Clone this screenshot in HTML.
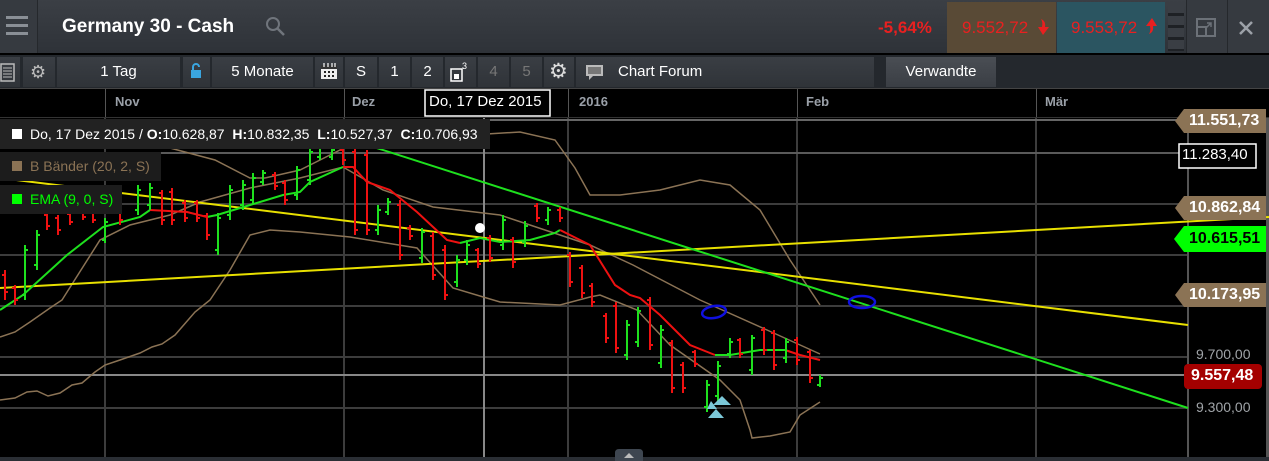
<!DOCTYPE html>
<html><head><meta charset="utf-8"><style>
body{margin:0;width:1269px;height:461px;overflow:hidden;background:#000;font-family:"Liberation Sans",sans-serif;position:relative}
.a{position:absolute}
.hdr{left:0;top:0;width:1269px;height:53px;background:linear-gradient(#3b3f45,#2e3238)}
.tb{left:0;top:55px;width:1269px;height:33px;background:#24282d}
.btn{position:absolute;top:57px;height:30px;background:linear-gradient(#3a3e44,#2f3338);color:#fff;font-size:15px;line-height:30px;text-align:center}
.ax{color:#9aa0a8;font-size:13px;font-weight:bold;top:94px}
.tag{position:absolute;height:24px;color:#fff;font-weight:bold;font-size:16px;line-height:24px}
</style></head><body>
<div class="a hdr"></div>
<div class="a" style="left:0;top:0;width:37px;height:53px;background:#363a40;border-right:1px solid #25282c"></div>
<div class="a" style="left:6px;top:16px;width:22px;height:3px;background:#8a8f96;box-shadow:0 8px 0 #8a8f96,0 16px 0 #8a8f96"></div>
<div class="a" style="left:62px;top:16px;color:#fff;font-weight:bold;font-size:19px">Germany 30 - Cash</div>
<svg class="a" style="left:264px;top:15px" width="24" height="24"><circle cx="9" cy="9" r="6" fill="none" stroke="#70757c" stroke-width="2"/><line x1="13" y1="13" x2="20" y2="20" stroke="#70757c" stroke-width="2.5"/></svg>
<div class="a" style="left:878px;top:18px;color:#e82020;font-weight:bold;font-size:17px">-5,64%</div>
<div class="a" style="left:947px;top:2px;width:109px;height:51px;background:#594a36"></div>
<div class="a" style="left:962px;top:18px;color:#e82020;font-size:17px">9.552,72</div>
<svg class="a" style="left:1037px;top:18px" width="14" height="18"><path d="M4 1 Q9 3 8 9 L12 9 L6 17 L1 9 L5 9 Q6 4 4 1Z" fill="#e82020"/></svg>
<div class="a" style="left:1057px;top:2px;width:108px;height:51px;background:#2b5561"></div>
<div class="a" style="left:1071px;top:18px;color:#e82020;font-size:17px">9.553,72</div>
<svg class="a" style="left:1145px;top:17px" width="14" height="18"><path d="M4 17 Q9 15 8 9 L12 9 L7 1 L1 9 L5 9 Q6 14 4 17Z" fill="#e82020"/></svg>
<div class="a" style="left:1168px;top:4px;width:16px;height:47px;background:repeating-linear-gradient(#3a3e44 0 9px,#1e2125 9px 12px)"></div>
<div class="a" style="left:1186px;top:0;width:40px;height:53px;background:#363a40;border-left:1px solid #25282c"></div>
<svg class="a" style="left:1195px;top:17px" width="24" height="22"><rect x="2" y="2" width="18" height="17" fill="none" stroke="#6c7178" stroke-width="2"/><rect x="2" y="10" width="9" height="9" fill="none" stroke="#6c7178" stroke-width="2"/><path d="M12 6 L16 6 L16 10 M16 6 L11 11" stroke="#6c7178" stroke-width="1.5" fill="none"/></svg>
<div class="a" style="left:1227px;top:0;width:42px;height:53px;background:#363a40;border-left:1px solid #25282c"></div>
<svg class="a" style="left:1238px;top:20px" width="16" height="16"><path d="M2 2 L14 14 M14 2 L2 14" stroke="#9ca1a8" stroke-width="2.5"/></svg>

<div class="a tb"></div>
<div class="btn" style="left:0;width:20px"></div>
<svg class="a" style="left:0;top:63px" width="16" height="20"><rect x="1" y="1" width="13" height="17" fill="none" stroke="#bbb" stroke-width="1.5"/><path d="M3 5h9M3 8h9M3 11h9M3 14h9" stroke="#bbb"/></svg>
<div class="btn" style="left:23px;width:32px"></div>
<div class="a" style="left:30px;top:63px;color:#bbb;font-size:18px;line-height:18px">⚙</div>
<div class="btn" style="left:57px;width:123px">1 Tag</div>
<div class="btn" style="left:183px;width:27px"></div>
<svg class="a" style="left:190px;top:62px" width="12" height="18"><path d="M3 8 V5 a3 3 0 0 1 6 0" stroke="#3aa6e0" stroke-width="2" fill="none"/><rect x="1" y="8" width="10" height="8" fill="#3aa6e0"/></svg>
<div class="btn" style="left:212px;width:101px">5 Monate</div>
<div class="btn" style="left:315px;width:28px"></div>
<svg class="a" style="left:319px;top:61px" width="20" height="20"><rect x="2" y="4" width="16" height="14" fill="#eee"/><rect x="2" y="4" width="16" height="4" fill="#333"/><path d="M5 2v4M9 2v4M13 2v4M16 2v4" stroke="#eee" stroke-width="1.3"/><path d="M5 10h2v2H5zM9 10h2v2H9zM13 10h2v2h-2zM5 14h2v2H5zM9 14h2v2H9zM13 14h2v2h-2z" fill="#222"/></svg>
<div class="btn" style="left:345px;width:32px">S</div>
<div class="btn" style="left:379px;width:31px">1</div>
<div class="btn" style="left:412px;width:31px">2</div>
<div class="btn" style="left:445px;width:31px"></div>
<svg class="a" style="left:450px;top:62px" width="18" height="22"><rect x="1" y="7" width="11" height="12" fill="none" stroke="#fff" stroke-width="1.5"/><rect x="4" y="12" width="5" height="5" fill="#fff"/><text x="12" y="7" fill="#fff" font-size="9" font-family="Liberation Sans">3</text></svg>
<div class="btn" style="left:478px;width:31px;color:#777">4</div>
<div class="btn" style="left:511px;width:31px;color:#777">5</div>
<div class="btn" style="left:544px;width:30px"></div>
<div class="a" style="left:549px;top:61px;color:#ddd;font-size:21px;line-height:21px">⚙</div>
<div class="btn" style="left:576px;width:298px"></div>
<svg class="a" style="left:584px;top:63px" width="22" height="20"><path d="M2 2h17v11H9l-4 4v-4H2z" fill="#bbb"/><path d="M4 4h13v7H4z" fill="#777"/></svg>
<div class="a" style="left:618px;top:63px;color:#fff;font-size:15px">Chart Forum</div>
<div class="btn" style="left:886px;width:110px;background:linear-gradient(#4a4e54,#3a3e44)">Verwandte</div>

<div class="a" style="left:0;top:88px;width:1269px;height:1px;background:#444"></div>
<div class="a" style="left:105px;top:89px;width:1px;height:29px;background:#555"></div>
<div class="a" style="left:344px;top:89px;width:1px;height:29px;background:#555"></div>
<div class="a" style="left:568px;top:89px;width:1px;height:29px;background:#555"></div>
<div class="a" style="left:797px;top:89px;width:1px;height:29px;background:#555"></div>
<div class="a" style="left:1036px;top:89px;width:1px;height:29px;background:#555"></div>
<div class="a ax" style="left:115px">Nov</div>
<div class="a ax" style="left:352px">Dez</div>
<div class="a ax" style="left:579px">2016</div>
<div class="a ax" style="left:806px">Feb</div>
<div class="a ax" style="left:1045px">Mär</div>
<div class="a" style="left:0;top:117px;width:1269px;height:1px;background:#333"></div>

<svg class="a" style="left:0;top:0" width="1269" height="461">
<g stroke="#3c3c3c" stroke-width="2">
<line x1="0" y1="153" x2="1188" y2="153"/><line x1="0" y1="204" x2="1188" y2="204"/><line x1="0" y1="255" x2="1188" y2="255"/><line x1="0" y1="306" x2="1188" y2="306"/><line x1="0" y1="357" x2="1188" y2="357"/><line x1="0" y1="408" x2="1188" y2="408"/>
<line x1="105" y1="118" x2="105" y2="461"/><line x1="344" y1="118" x2="344" y2="461"/><line x1="568" y1="118" x2="568" y2="461"/><line x1="797" y1="118" x2="797" y2="461"/><line x1="1036" y1="118" x2="1036" y2="461"/>
</g>
<line x1="0" y1="120" x2="1188" y2="120" stroke="#666" stroke-width="2"/>
<line x1="0" y1="153" x2="1180" y2="153" stroke="#777" stroke-width="1"/>
<line x1="0" y1="375" x2="1188" y2="375" stroke="#888" stroke-width="2"/>
<line x1="484" y1="118" x2="484" y2="461" stroke="#888" stroke-width="2"/>
<line x1="1188" y1="118" x2="1188" y2="461" stroke="#555" stroke-width="2"/>
<rect x="1266" y="118" width="3" height="343" fill="#555"/>
<rect x="0" y="457" width="1269" height="4" fill="#2a2e34"/>
<g fill="none" stroke="#8b7355" stroke-width="1.5">
<polyline points="0,140 60,138 120,142 170,148 215,160 250,178 265,178 300,170 330,155 350,145 380,142 420,142 470,135 520,132 555,140 575,168 590,195 620,195 660,190 700,180 730,185 760,210 790,260 820,305"/>
<polyline points="0,337 15,332 30,322 50,308 62,300 100,240 130,225 170,215 200,202 250,188 300,178 343,167 383,190 433,207 500,215 560,235 590,245 633,265 700,300 767,330 820,354"/>
<polyline points="0,400 15,398 27,392 37,391 48,396 60,393 72,385 82,383 95,372 105,365 120,360 140,353 152,347 162,344 175,335 195,312 210,300 230,270 250,235 270,230 300,232 350,237 417,248 453,288 500,302 560,305 590,297 600,295 637,310 670,345 720,380 740,400 750,430 752,438 770,436 790,432 800,415 820,402"/>
</g>
<line x1="0" y1="178" x2="1188" y2="325" stroke="#e8e000" stroke-width="2"/>
<line x1="0" y1="288" x2="1269" y2="217" stroke="#e8e000" stroke-width="2"/>
<line x1="358" y1="142" x2="1188" y2="408" stroke="#1ee01e" stroke-width="2"/>
<g fill="none" stroke-width="2">
<polyline stroke="#1ee01e" points="0,310 23,295 67,255 103,227 140,217 150,210"/>
<polyline stroke="#ee1111" points="150,210 187,212 207,217"/>
<polyline stroke="#1ee01e" points="207,217 217,215 250,205 283,195 300,192 310,182 343,167"/>
<polyline stroke="#ee1111" points="343,167 353,167 367,182 390,190 417,212 447,240 460,243"/>
<polyline stroke="#1ee01e" points="460,243 480,238 500,242 530,240 555,233 560,230"/>
<polyline stroke="#ee1111" points="560,230 590,245 615,285 630,295 640,298 660,315 675,330 690,345 715,355"/>
<polyline stroke="#1ee01e" points="715,355 730,355 760,350 785,350"/>
<polyline stroke="#ee1111" points="785,350 800,355 820,360"/>
</g>
<g stroke-width="2">
<path stroke="#ee1111" d="M5 270v30M2 275h3M5 292h3M15 285v20M12 288h3M15 300h3M47 213v17M44 215h3M47 226h3M58 215v20M55 218h3M58 230h3M70 212v13M67 214h3M70 222h3M83 205v15M80 207h3M83 217h3M93 205v18M90 208h3M93 220h3M120 205v20M117 208h3M120 220h3M162 190v35M159 193h3M162 220h3M172 188v37M169 192h3M172 220h3M185 200v22M182 203h3M185 218h3M197 200v22M194 203h3M197 218h3M207 213v27M204 216h3M207 235h3M275 172v18M272 175h3M275 186h3M285 180v25M282 183h3M285 200h3M343 147v18M340 150h3M343 160h3M355 147v88M352 152h3M355 230h3M367 150v85M364 155h3M367 230h3M400 200v60M397 205h3M400 255h3M410 225v15M407 228h3M410 236h3M433 232v48M430 236h3M433 275h3M445 245v55M442 250h3M445 295h3M478 248v20M475 250h3M478 264h3M490 235v27M487 238h3M490 258h3M513 237v31M510 240h3M513 262h3M537 203v19M534 206h3M537 218h3M560 207v15M557 210h3M560 218h3M570 252v35M567 255h3M570 282h3M582 265v33M579 268h3M582 293h3M592 283v24M589 286h3M592 302h3M606 313v30M603 316h3M606 338h3M616 302v51M613 306h3M616 348h3M650 297v53M647 300h3M650 345h3M672 340v53M669 343h3M672 388h3M683 362v31M680 365h3M683 388h3M695 350v17M692 352h3M695 364h3M740 338v20M737 340h3M740 354h3M764 327v28M761 330h3M764 350h3M774 330v40M771 333h3M774 365h3M797 337v28M794 340h3M797 360h3M810 350v33M807 352h3M810 378h3"/>
<path stroke="#1ee01e" d="M25 245v55M22 295h3M25 250h3M37 230v40M34 265h3M37 235h3M105 218v25M102 240h3M105 222h3M138 185v30M135 210h3M138 190h3M150 183v27M147 205h3M150 188h3M218 213v42M215 250h3M218 218h3M230 185v35M227 215h3M230 190h3M243 180v30M240 205h3M243 185h3M253 173v32M250 200h3M253 178h3M263 170v15M260 182h3M263 173h3M297 166v34M294 195h3M297 170h3M310 147v38M307 180h3M310 152h3M320 145v15M317 157h3M320 148h3M332 147v13M329 157h3M332 150h3M378 205v30M375 230h3M378 210h3M388 198v17M385 212h3M388 202h3M422 228v35M419 258h3M422 232h3M457 255v32M454 282h3M457 260h3M467 240v25M464 260h3M467 245h3M503 215v35M500 245h3M503 220h3M525 221v26M522 242h3M525 226h3M548 207v18M545 220h3M548 210h3M627 320v40M624 355h3M627 325h3M638 307v40M635 342h3M638 311h3M661 325v43M658 363h3M661 330h3M707 380v32M704 407h3M707 385h3M718 361v40M715 396h3M718 366h3M730 338v20M727 354h3M730 342h3M752 335v40M749 370h3M752 338h3M786 338v25M783 358h3M786 342h3M820 375v12M817 385h3M820 378h3"/>
</g>
<ellipse cx="714" cy="312" rx="12" ry="6" fill="none" stroke="#1010e0" stroke-width="2.5" transform="rotate(-10 714 312)"/>
<ellipse cx="862" cy="302" rx="13" ry="6" fill="none" stroke="#1010e0" stroke-width="2.5"/>
<g fill="#7cc8d8"><path d="M722 396l9 9h-18z"/><path d="M716 409l8 9h-16z"/><path d="M711 401l6 8h-10z"/></g>
<circle cx="480" cy="228" r="5" fill="#fff"/>
<path d="M615 461v-8q0-4 4-4h20q4 0 4 4v8z" fill="#3e4650"/><path d="M624 458l5-5 5 5z" fill="#bbb"/>
<g fill="#8b7355"><path d="M1175 121l9-12h82v24h-82z"/><path d="M1175 208l9-12h82v24h-82z"/><path d="M1175 295l9-12h82v24h-82z"/></g>
<path d="M1174 239l10-13h82v26h-82z" fill="#0f0"/>
<rect x="1184" y="364" width="78" height="25" rx="4" fill="#a40000"/>
<rect x="1179" y="144" width="77" height="24" fill="#000" stroke="#fff" stroke-width="1.5"/>
<rect x="425" y="90" width="125" height="26" fill="#000" stroke="#fff" stroke-width="1.5"/>
</svg>
<div class="tag" style="left:1189px;top:109px">11.551,73</div>
<div class="tag" style="left:1189px;top:196px">10.862,84</div>
<div class="tag" style="left:1189px;top:283px">10.173,95</div>
<div class="tag" style="left:1189px;top:227px;color:#000">10.615,51</div>
<div class="tag" style="left:1191px;top:364px">9.557,48</div>
<div class="a" style="left:1182px;top:146px;color:#fff;font-size:15px">11.283,40</div>
<div class="a" style="left:1196px;top:346px;color:#a0a4a8;font-size:14px">9.700,00</div>
<div class="a" style="left:1196px;top:399px;color:#a0a4a8;font-size:14px">9.300,00</div>
<div class="a" style="left:429px;top:93px;color:#fff;font-size:15px">Do, 17 Dez 2015</div>
<div class="a" style="left:0;top:119px;width:490px;height:30px;background:#222;color:#fff;font-size:14px;line-height:30px;white-space:nowrap;overflow:hidden"><span style="display:inline-block;width:10px;height:10px;background:#fff;margin:0 8px 0 12px"></span>Do, 17 Dez 2015 / <b>O:</b>10.628,87&nbsp; <b>H:</b>10.832,35&nbsp; <b>L:</b>10.527,37&nbsp; <b>C:</b>10.706,93</div>
<div class="a" style="left:0;top:152px;width:161px;height:29px;background:#1c1c1c;color:#8b7355;font-size:14px;line-height:29px;white-space:nowrap"><span style="display:inline-block;width:10px;height:10px;background:#8b7355;margin:0 8px 0 12px"></span>B Bänder (20, 2, S)</div>
<div class="a" style="left:0;top:185px;width:122px;height:29px;background:#1c1c1c;color:#0f0;font-size:14px;line-height:29px;white-space:nowrap"><span style="display:inline-block;width:10px;height:10px;background:#0f0;margin:0 8px 0 12px"></span>EMA (9, 0, S)</div>
</body></html>
